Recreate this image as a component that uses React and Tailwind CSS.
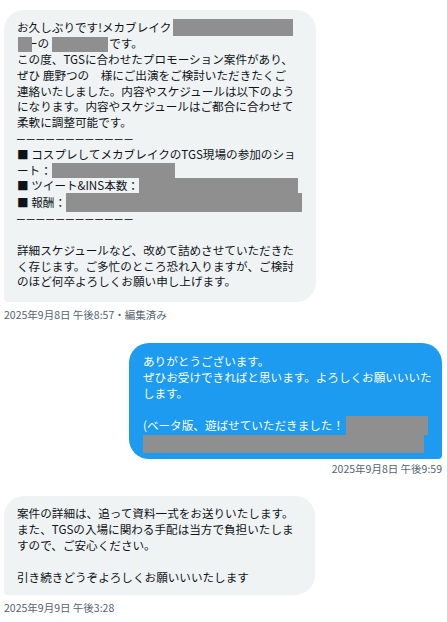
import React from "react";

const R = ({ w, h = 16, cls = "" }) => (
  <span
    className={`inline-block align-middle bg-[#8f8f8f] ${cls}`}
    style={{ width: w, height: h }}
  />
);

const L = ({ children }) => (
  <div className="whitespace-nowrap h-[15.8px] flex items-center">{children}</div>
);

const Dash = () => (
  <L>
    <span
      className="text-[14px] tracking-[2px] text-[#333]"
      style={{ fontFamily: '"Liberation Sans", sans-serif' }}
    >
      ––––––––––––
    </span>
  </L>
);

export default function App() {
  return (
    <div
      className="w-[447px] h-[622px] bg-white overflow-hidden pt-[10px] text-[#0f1419]"
      style={{ fontFamily: '"Noto Sans CJK JP", "Noto Sans", sans-serif' }}
    >
      {/* Message 1 */}
      <div className="pl-[4px]">
        <div className="w-[312px] bg-[#eff3f4] rounded-[20px] rounded-bl-[4px] pl-[13px] pr-[8px] pt-[9px] pb-[12px] text-[11.6px] leading-[15.8px]">
          <div className="whitespace-nowrap h-[17px] flex items-center">
            お久しぶりです!メカブレイク<R w={120} h={17} cls="ml-[2px]" />
          </div>
          <div className="whitespace-nowrap h-[16px] flex items-center">
            <R w={14} h={15} cls="ml-[1px] relative z-10" />
            <span className="ml-[-6px]">ーの</span>
            <R w={56} h={15} cls="ml-[3px]" />
            <span className="ml-[1px]">です。</span>
          </div>
          <L>この度、TGSに合わせたプロモーション案件があり、</L>
          <L>ぜひ 鹿野つの　様にご出演をご検討いただきたくご</L>
          <L>連絡いたしました。内容やスケジュールは以下のよう</L>
          <L>になります。内容やスケジュールはご都合に合わせて</L>
          <L>柔軟に調整可能です。</L>
          <Dash />
          <L>■ コスプレしてメカブレイクのTGS現場の参加のショ</L>
          <L>
            ート：<R w={123} h={15} />
          </L>
          <L>
            ■ ツイート&amp;INS本数：<R w={159} h={16} />
          </L>
          <div className="whitespace-nowrap h-[17px] flex items-center">
            ■ 報酬：<R w={236} h={19} />
          </div>
          <Dash />
          <L></L>
          <L>詳細スケジュールなど、改めて詰めさせていただきた</L>
          <L>く存じます。ご多忙のところ恐れ入りますが、ご検討</L>
          <L>のほど何卒よろしくお願い申し上げます。</L>
        </div>
        <div className="mt-[6px] text-[10.5px] leading-[13px] text-[#536471] whitespace-nowrap">
          2025年9月8日 午後8:57・編集済み
        </div>
      </div>

      {/* Message 2 */}
      <div className="mt-[22px] pr-[5px] flex flex-col items-end">
        <div className="w-[313px] bg-[#1d9bf0] text-white rounded-[20px] rounded-br-[4px] pl-[14px] pr-[8px] pt-[11px] pb-[6px] text-[11.6px] leading-[15.8px]">
          <L>ありがとうございます。</L>
          <L>ぜひお受けできればと思います。よろしくお願いいいた</L>
          <L>します。</L>
          <L></L>
          <div className="whitespace-nowrap h-[17px] flex items-center">
            (ベータ版、遊ばせていただきました！<R w={82} h={19} cls="ml-[2px]" />
          </div>
          <div className="whitespace-nowrap h-[19px] flex items-center">
            <R w={281} h={18} />
          </div>
        </div>
        <div className="mt-[3px] text-[10.5px] leading-[13px] text-[#536471] whitespace-nowrap">
          2025年9月8日 午後9:59
        </div>
      </div>

      {/* Message 3 */}
      <div className="mt-[21px] pl-[4px]">
        <div className="w-[311px] bg-[#eff3f4] rounded-[20px] rounded-bl-[4px] pl-[13px] pr-[8px] pt-[10px] pb-[10px] text-[11.6px] leading-[15.8px]">
          <L>案件の詳細は、追って資料一式をお送りいたします。</L>
          <L>また、TGSの入場に関わる手配は当方で負担いたしま</L>
          <L>すので、ご安心ください。</L>
          <L></L>
          <L>引き続きどうぞよろしくお願いいいたします</L>
        </div>
        <div className="mt-[6px] text-[10.5px] leading-[13px] text-[#536471] whitespace-nowrap">
          2025年9月9日 午後3:28
        </div>
      </div>
    </div>
  );
}
